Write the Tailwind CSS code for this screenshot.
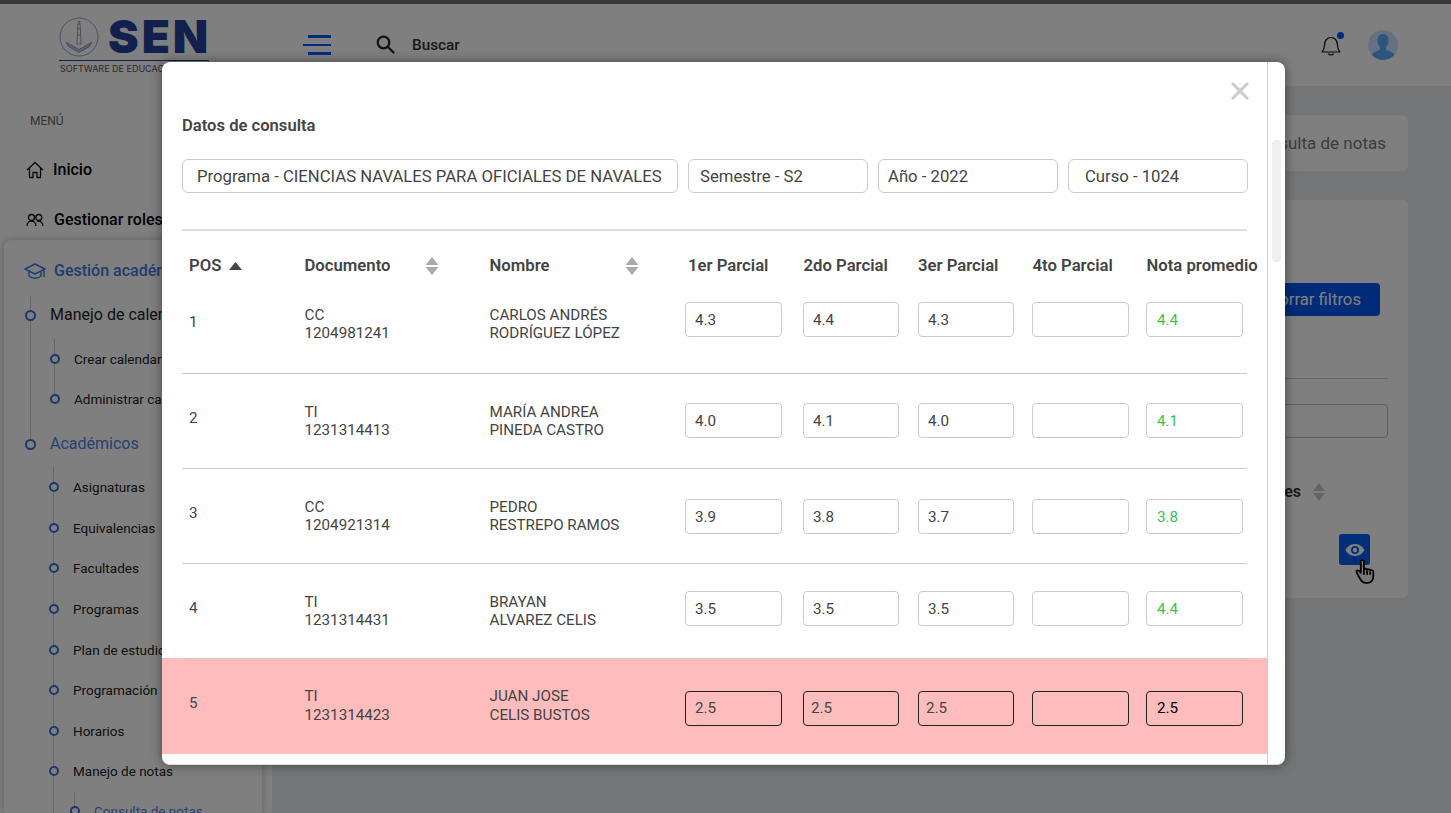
<!DOCTYPE html>
<html lang="es">
<head>
  <meta charset="utf-8" />
  <meta name="viewport" content="width=device-width, initial-scale=1" />
  <title>SEN Consulta de notas</title>
  <script src="https://cdn.jsdelivr.net/npm/@tailwindcss/browser@4"></script>
</head>
<body class="relative h-[813px] w-[1451px] overflow-hidden bg-white font-['Roboto',sans-serif] text-[#222]">
  <!-- Barra superior -->
  <div class="h-1 bg-[#757575]"></div>
  <header class="flex h-[82px] items-start bg-white">
    <a href="#" class="ml-[59px] mt-[11px] block w-[150px] shrink-0">
      <div class="flex h-[43px] items-center">
        <svg class="h-[40px] w-[40px] shrink-0" viewBox="0 0 40 40" fill="none" stroke="#7a8fb5" stroke-width="0.800">
          <circle cx="20" cy="20" r="19" />
          <path d="M18.800 7h2.400l.800 20h-4zM19.200 7V4.500h1.600V7M18.500 12h3M18.200 18h3.600" />
          <path d="M7 25L20 32.500 33 25l-2.500 4.500L20 35.500 9.500 29.500z" fill="#b9c2d2" />
        </svg>
        <span class="-mt-[2px] ml-[9px] font-['Inter',sans-serif] text-[46px] leading-none font-black tracking-[3px] text-[#24409a]">SEN</span>
      </div>
      <div class="mt-[2px] h-[1px] bg-[#24409a]"></div>
      <p class="ml-[1px] mt-[2px] font-['Inter',sans-serif] text-[9px] leading-[11px] whitespace-nowrap text-[#555]">SOFTWARE DE EDUCACIÓN NAVAL</p>
    </a>
    <button class="ml-[94px] mt-[31px] flex w-[28px] flex-col items-end gap-[6px]">
      <span class="h-[2.500px] w-[23px] bg-[#0058ff]"></span>
      <span class="h-[2.500px] w-[28px] bg-[#0058ff]"></span>
      <span class="h-[2.500px] w-[23px] bg-[#0058ff]"></span>
    </button>
    <svg class="ml-[45px] mt-[31px] h-[19px] w-[19px]" viewBox="0 0 19 19" fill="none" stroke="#222" stroke-width="2.200">
      <circle cx="7.500" cy="7.500" r="5.800" />
      <path d="M12 12l5.500 5.500" stroke-linecap="round" />
    </svg>
    <span class="ml-[17px] mt-[31px] text-[15.300px] leading-[20px] font-medium text-[#333]">Buscar</span>
    <div class="ml-auto mr-[53px] mt-[25px] flex items-center gap-[25px]">
      <div class="relative h-[32px] w-[22px]">
        <svg class="absolute left-0 top-[6px] h-[22px] w-[20px]" viewBox="0 0 20 22" fill="none" stroke="#111" stroke-width="1.200">
          <path d="M1 17c2-2 2.500-3 2.500-7 0-4 2.500-7.500 6.500-7.500s6.500 3.500 6.500 7.500c0 4 .500 5 2.500 7z" stroke-linejoin="round" />
          <path d="M7.500 18.500c.500 2 4.500 2 5 0" />
        </svg>
        <span class="absolute left-[16px] top-[3px] h-[7px] w-[7px] rounded-full bg-[#0054ff]"></span>
      </div>
      <div class="h-[30px] w-[30px] overflow-hidden rounded-full bg-[#cce2fe]">
        <svg class="h-[30px] w-[30px]" viewBox="0 0 30 30" fill="#5aa8ff">
          <path d="M9.500 10c0-4 2.500-6 5.500-6s5.500 2 5.500 6c0 3-1 5.500-2.500 7v2.500c2 1.500 6.500 2 8 5v6H4v-6c1.500-3 6-3.500 8-5V17c-1.500-1.500-2.500-4-2.500-7z" />
        </svg>
      </div>
    </div>
  </header>

  <div class="flex h-[727px]">
    <!-- Menu lateral -->
    <aside class="h-full w-[272px] shrink-0 bg-white">
      <p class="pl-[30px] pt-[25px] text-xs leading-[20px] text-[#666]">MENÚ</p>
      <a href="#" class="mt-[14px] flex h-[50px] items-center pl-[26px] font-medium text-black">
        <svg class="mr-[9px] h-[18px] w-[18px]" viewBox="0 0 18 18" fill="none" stroke="#111" stroke-width="1.300" stroke-linejoin="round">
          <path d="M1 9l8-7.500L17 9M3.500 7.500V16.500H7v-5h4v5h3.500V7.500" />
        </svg>
        Inicio
      </a>
      <a href="#" class="flex h-[45px] items-center pt-[5px] pl-[26px] font-medium whitespace-nowrap text-black">
        <svg class="mr-[10px] h-[18px] w-[18px]" viewBox="0 0 18 18" fill="none" stroke="#111" stroke-width="1.300">
          <circle cx="5.500" cy="6.500" r="3" />
          <circle cx="12.800" cy="6.500" r="3" />
          <path d="M1 15c0-3 2-5 4.500-5S10 12 10 15M11 10.200c3-.700 6 1.300 6 4.800" />
        </svg>
        Gestionar roles
      </a>
      <div class="ml-[4px] h-[573px] w-[258px] overflow-hidden rounded-t-lg bg-white shadow-[0_0_8px_rgba(0,0,0,0.25)]">
        <div class="flex h-[56px] items-center pt-[6px] pl-[20px] font-medium whitespace-nowrap text-[#4078e0]">
          <svg class="mr-[8px] h-[22px] w-[22px]" viewBox="0 0 22 22" fill="none" stroke="#4078e0" stroke-width="1.400" stroke-linejoin="round">
            <path d="M1 9l10-5 10 5-10 5z" />
            <path d="M5 11.500V16c3 3 9 3 12 0v-4.500M20 10v7" />
          </svg>
          Gestión académica
        </div>
        <div class="ml-[26px] h-[148px] border-l-[1.500px] border-[#ccc]">
          <div class="-ml-[6px] flex h-[38px] items-center text-base whitespace-nowrap">
            <span class="mr-[14px] h-[11px] w-[11px] rounded-full border-[2.500px] border-[#3670d8] bg-white"></span>Manejo de calendario
          </div>
          <div class="ml-[23px] mt-[5px] h-[60px] border-l-[1.500px] border-[#ccc]">
            <div class="-ml-[5px] flex h-[40px] items-center text-[13.500px] whitespace-nowrap"><span class="mr-[14px] h-[10px] w-[10px] rounded-full border-2 border-[#3670d8] bg-white"></span>Crear calendario</div>
            <div class="-ml-[5px] flex h-[40px] items-center text-[13.500px] whitespace-nowrap"><span class="mr-[14px] h-[10px] w-[10px] rounded-full border-2 border-[#3670d8] bg-white"></span>Administrar calendario</div>
          </div>
        </div>
        <div class="-mt-[18px] ml-[21px] flex h-[36px] items-center text-base text-[#4c82e8]">
          <span class="mr-[14px] h-[11px] w-[11px] rounded-full border-[2.500px] border-[#3670d8] bg-white"></span>Académicos
        </div>
        <div class="ml-[49px] mt-[5px] h-[400px] border-l-[1.500px] border-[#ccc] text-[13.500px]">
          <div class="-ml-[5px] flex h-[40.600px] items-center"><span class="mr-[14px] h-[10px] w-[10px] rounded-full border-2 border-[#3670d8] bg-white"></span>Asignaturas</div>
          <div class="-ml-[5px] flex h-[40.600px] items-center"><span class="mr-[14px] h-[10px] w-[10px] rounded-full border-2 border-[#3670d8] bg-white"></span>Equivalencias</div>
          <div class="-ml-[5px] flex h-[40.600px] items-center"><span class="mr-[14px] h-[10px] w-[10px] rounded-full border-2 border-[#3670d8] bg-white"></span>Facultades</div>
          <div class="-ml-[5px] flex h-[40.600px] items-center"><span class="mr-[14px] h-[10px] w-[10px] rounded-full border-2 border-[#3670d8] bg-white"></span>Programas</div>
          <div class="-ml-[5px] flex h-[40.600px] items-center"><span class="mr-[14px] h-[10px] w-[10px] rounded-full border-2 border-[#3670d8] bg-white"></span>Plan de estudios</div>
          <div class="-ml-[5px] flex h-[40.600px] items-center"><span class="mr-[14px] h-[10px] w-[10px] rounded-full border-2 border-[#3670d8] bg-white"></span>Programación</div>
          <div class="-ml-[5px] flex h-[40.600px] items-center"><span class="mr-[14px] h-[10px] w-[10px] rounded-full border-2 border-[#3670d8] bg-white"></span>Horarios</div>
          <div class="-ml-[5px] flex h-[40.600px] items-center"><span class="mr-[14px] h-[10px] w-[10px] rounded-full border-2 border-[#3670d8] bg-white"></span>Manejo de notas</div>
          <div class="ml-[20px] h-[60px] border-l-[1.500px] border-[#ccc] pt-[8px]">
            <div class="-ml-[5px] flex h-[22px] items-center text-[#4c82e8]"><span class="mr-[14px] h-[10px] w-[10px] rounded-full border-2 border-[#3670d8] bg-white"></span>Consulta de notas</div>
          </div>
        </div>
      </div>
    </aside>

    <!-- Contenido -->
    <main class="flex-1 bg-[#e8eaee] pl-[20px] pr-[43px] pt-[29px]">
      <div class="ml-auto flex h-[56px] w-[400px] items-center justify-end rounded-md bg-white pr-[22px] pt-[2px] text-[17px] text-[#777]">Consulta de notas</div>
      <section class="mt-[29px] flex h-[398px] flex-col items-end rounded-md bg-white pr-[20px]">
        <button class="mr-[8px] mt-[83px] h-[33px] w-[180px] rounded bg-[#0056f0] pr-[19px] text-right text-[16.700px] text-white">Borrar filtros</button>
        <div class="mt-[62px] h-px w-[400px] bg-[#ccc]"></div>
        <div class="mt-[25px] h-[34px] w-[400px] rounded border border-[#bbb]"></div>
        <div class="mt-[44px] flex h-[20px] items-center gap-[11px] pr-[62px] text-base font-semibold text-[#333]">
          Acciones
          <svg class="h-[20px] w-[14px]" viewBox="0 0 14 20" fill="#c8c8c8"><path d="M7 1l6 8H1zM1 11h12l-6 8z" /></svg>
        </div>
        <button class="mr-[18px] mt-[32px] flex h-[31px] w-[31px] items-center justify-center rounded-[3px] bg-[#005cf0]">
          <svg class="h-[16px] w-[20px]" viewBox="0 0 20 16" fill="#fff">
            <path d="M10 2C5.500 2 2 5 .500 8c1.500 3 5 6 9.500 6s8-3 9.500-6C18 5 14.500 2 10 2zm0 10a4 4 0 1 1 0-8 4 4 0 0 1 0 8z" />
            <circle cx="10" cy="8" r="2.200" />
          </svg>
        </button>
      </section>
    </main>
  </div>

  <!-- Fondo del modal -->
  <div class="absolute inset-0 bg-black/50"></div>

  <!-- Cursor -->
  <svg class="absolute left-[1355px] top-[559px] h-[25px] w-[22px]" viewBox="0 0 21 24" fill="#777" stroke="#000" stroke-width="1.700" stroke-linejoin="round">
    <path d="M5.500 2.500c0-2 3-2 3 0v7.500c1-1 2.500-.800 3 .300 1-.800 2.500-.500 3 .600 1.200-.700 3-.200 3 1.600v4.500c0 3-2 6-5.500 6H10c-3 0-4-2-5.500-4.500L1.500 13c-.700-1.500 1-3 2.500-1.500l1.500 1.800z" />
    <path d="M8.500 10v5M11.500 11v4M14.500 12v3" fill="none" />
  </svg>

  <!-- Modal -->
  <div class="absolute left-[162px] top-[62px] flex h-[703px] w-[1123px] overflow-hidden rounded-lg border-b border-[#ddd] bg-white shadow-[0_0_12px_rgba(0,0,0,0.45)]">
    <div class="relative w-[1105px] shrink-0 text-[#444]">
      <svg class="absolute right-[18px] top-[20px] h-[18px] w-[18px]" viewBox="0 0 18 18" stroke="#ccc" stroke-width="3"><path d="M1 1l16 16M17 1L1 17" /></svg>
      <h2 class="ml-5 pt-[52px] text-[16.600px] leading-[24px] font-semibold text-[#444]">Datos de consulta</h2>
      <div class="ml-5 mt-[21px] grid grid-cols-[496px_180px_180px_180px] gap-[10px] text-[16.700px]">
        <div class="flex h-[34px] items-center rounded-md border border-[#ccc] pl-[14px] pt-[1px] whitespace-nowrap">Programa - CIENCIAS NAVALES PARA OFICIALES DE NAVALES</div>
        <div class="flex h-[34px] items-center rounded-md border border-[#ccc] pl-[11px] pt-[1px]">Semestre - S2</div>
        <div class="flex h-[34px] items-center rounded-md border border-[#ccc] pl-[9px] pt-[1px]">Año - 2022</div>
        <div class="flex h-[34px] items-center rounded-md border border-[#ccc] pl-[16px] pt-[1px]">Curso - 1024</div>
      </div>
      <div class="mx-5 mt-[36px] h-[2px] bg-[#ddd]"></div>

      <!-- Encabezado de tabla -->
      <div class="mx-5 grid h-[48px] grid-cols-[115.500px_185px_195.500px_118px_115px_114px_114px_97px] items-center pl-[7px] pt-[22px] text-[16.700px] font-semibold">
        <div class="flex items-center gap-[8px]">POS <svg class="h-[8px] w-[13px]" viewBox="0 0 13 8" fill="#444"><path d="M6.500 0L13 8H0z" /></svg></div>
        <div class="flex items-center justify-between pr-[51px]">Documento <svg class="h-[20px] w-[14px]" viewBox="0 0 14 20" fill="#aaa"><path d="M7 1l6.500 8H.500zM.500 11h13L7 19z" /></svg></div>
        <div class="flex items-center justify-between pr-[46px]">Nombre <svg class="h-[20px] w-[14px]" viewBox="0 0 14 20" fill="#aaa"><path d="M7 1l6.500 8H.500zM.500 11h13L7 19z" /></svg></div>
        <div class="pl-[3px] whitespace-nowrap">1er Parcial</div>
        <div class="pl-[0.500px] whitespace-nowrap">2do Parcial</div>
        <div class="whitespace-nowrap">3er Parcial</div>
        <div class="pl-[0.500px] whitespace-nowrap">4to Parcial</div>
        <div class="pl-[0.500px] whitespace-nowrap">Nota promedio</div>
      </div>

      <!-- Filas -->
      <div class="mx-5 grid h-[95px] grid-cols-[115.500px_185px_195.500px_118px_115px_114px_114px_97px] items-start border-b border-[#ccc] pl-[7px] text-[15.200px] leading-[18px]">
        <div class="mt-[34px]">1</div>
        <div class="mt-[27px]">CC<br />1204981241</div>
        <div class="mt-[27px] whitespace-nowrap">CARLOS ANDRÉS<br />RODRÍGUEZ LÓPEZ</div>
        <div class="mr-[21px] mt-[23px] flex h-[35px] items-center rounded border border-[#ccc] pl-[9px]">4.3</div>
        <div class="mr-[19px] mt-[23px] flex h-[35px] items-center rounded border border-[#ccc] pl-[9px]">4.4</div>
        <div class="mr-[18px] mt-[23px] flex h-[35px] items-center rounded border border-[#ccc] pl-[9px]">4.3</div>
        <div class="mr-[17px] mt-[23px] h-[35px] rounded border border-[#ccc]"></div>
        <div class="mt-[23px] flex h-[35px] items-center rounded border border-[#ccc] pl-[10px] text-[#3cc24e]">4.4</div>
      </div>
      <div class="mx-5 grid h-[95px] grid-cols-[115.500px_185px_195.500px_118px_115px_114px_114px_97px] items-start border-b border-[#ccc] pl-[7px] text-[15.200px] leading-[18px]">
        <div class="mt-[35px]">2</div>
        <div class="mt-[29px]">TI<br />1231314413</div>
        <div class="mt-[29px] whitespace-nowrap">MARÍA ANDREA<br />PINEDA CASTRO</div>
        <div class="mr-[21px] mt-[29px] flex h-[35px] items-center rounded border border-[#ccc] pl-[9px]">4.0</div>
        <div class="mr-[19px] mt-[29px] flex h-[35px] items-center rounded border border-[#ccc] pl-[9px]">4.1</div>
        <div class="mr-[18px] mt-[29px] flex h-[35px] items-center rounded border border-[#ccc] pl-[9px]">4.0</div>
        <div class="mr-[17px] mt-[29px] h-[35px] rounded border border-[#ccc]"></div>
        <div class="mt-[29px] flex h-[35px] items-center rounded border border-[#ccc] pl-[10px] text-[#3cc24e]">4.1</div>
      </div>
      <div class="mx-5 grid h-[95px] grid-cols-[115.500px_185px_195.500px_118px_115px_114px_114px_97px] items-start border-b border-[#ccc] pl-[7px] text-[15.200px] leading-[18px]">
        <div class="mt-[35px]">3</div>
        <div class="mt-[29px]">CC<br />1204921314</div>
        <div class="mt-[29px] whitespace-nowrap">PEDRO<br />RESTREPO RAMOS</div>
        <div class="mr-[21px] mt-[30px] flex h-[35px] items-center rounded border border-[#ccc] pl-[9px]">3.9</div>
        <div class="mr-[19px] mt-[30px] flex h-[35px] items-center rounded border border-[#ccc] pl-[9px]">3.8</div>
        <div class="mr-[18px] mt-[30px] flex h-[35px] items-center rounded border border-[#ccc] pl-[9px]">3.7</div>
        <div class="mr-[17px] mt-[30px] h-[35px] rounded border border-[#ccc]"></div>
        <div class="mt-[30px] flex h-[35px] items-center rounded border border-[#ccc] pl-[10px] text-[#3cc24e]">3.8</div>
      </div>
      <div class="relative z-10 mx-5 grid h-[95px] grid-cols-[115.500px_185px_195.500px_118px_115px_114px_114px_97px] items-start border-b border-[#ccc] pl-[7px] text-[15.200px] leading-[18px]">
        <div class="mt-[35px]">4</div>
        <div class="mt-[29px]">TI<br />1231314431</div>
        <div class="mt-[29px] whitespace-nowrap">BRAYAN<br />ALVAREZ CELIS</div>
        <div class="mr-[21px] mt-[27px] flex h-[35px] items-center rounded border border-[#ccc] pl-[9px]">3.5</div>
        <div class="mr-[19px] mt-[27px] flex h-[35px] items-center rounded border border-[#ccc] pl-[9px]">3.5</div>
        <div class="mr-[18px] mt-[27px] flex h-[35px] items-center rounded border border-[#ccc] pl-[9px]">3.5</div>
        <div class="mr-[17px] mt-[27px] h-[35px] rounded border border-[#ccc]"></div>
        <div class="mt-[27px] flex h-[35px] items-center rounded border border-[#ccc] pl-[10px] text-[#3cc24e]">4.4</div>
      </div>
      <div class="-mt-px h-[96px] bg-[#ffbcbc] px-5">
        <div class="grid grid-cols-[115.500px_185px_195.500px_118px_115px_114px_114px_97px] items-start pl-[7px] text-[15.200px] leading-[18.500px]">
          <div class="mt-[36px]">5</div>
          <div class="mt-[29px]">TI<br />1231314423</div>
          <div class="mt-[29px] whitespace-nowrap">JUAN JOSE<br />CELIS BUSTOS</div>
          <div class="mr-[21px] mt-[33px] flex h-[35px] items-center rounded border border-[#222] pl-[9px]">2.5</div>
          <div class="mr-[19px] mt-[33px] flex h-[35px] items-center rounded border border-[#222] pl-[7px]">2.5</div>
          <div class="mr-[18px] mt-[33px] flex h-[35px] items-center rounded border border-[#222] pl-[7px]">2.5</div>
          <div class="mr-[17px] mt-[33px] h-[35px] rounded border border-[#222]"></div>
          <div class="mt-[33px] flex h-[35px] items-center rounded border border-[#222] pl-[10px] text-black">2.5</div>
        </div>
      </div>
    </div>
    <!-- Barra de desplazamiento -->
    <div class="flex-1 border-l border-[#ccc] pl-[4px] pt-[78px]">
      <div class="h-[122px] w-[9px] rounded bg-[#efefef]"></div>
    </div>
  </div>
</body>
</html>
